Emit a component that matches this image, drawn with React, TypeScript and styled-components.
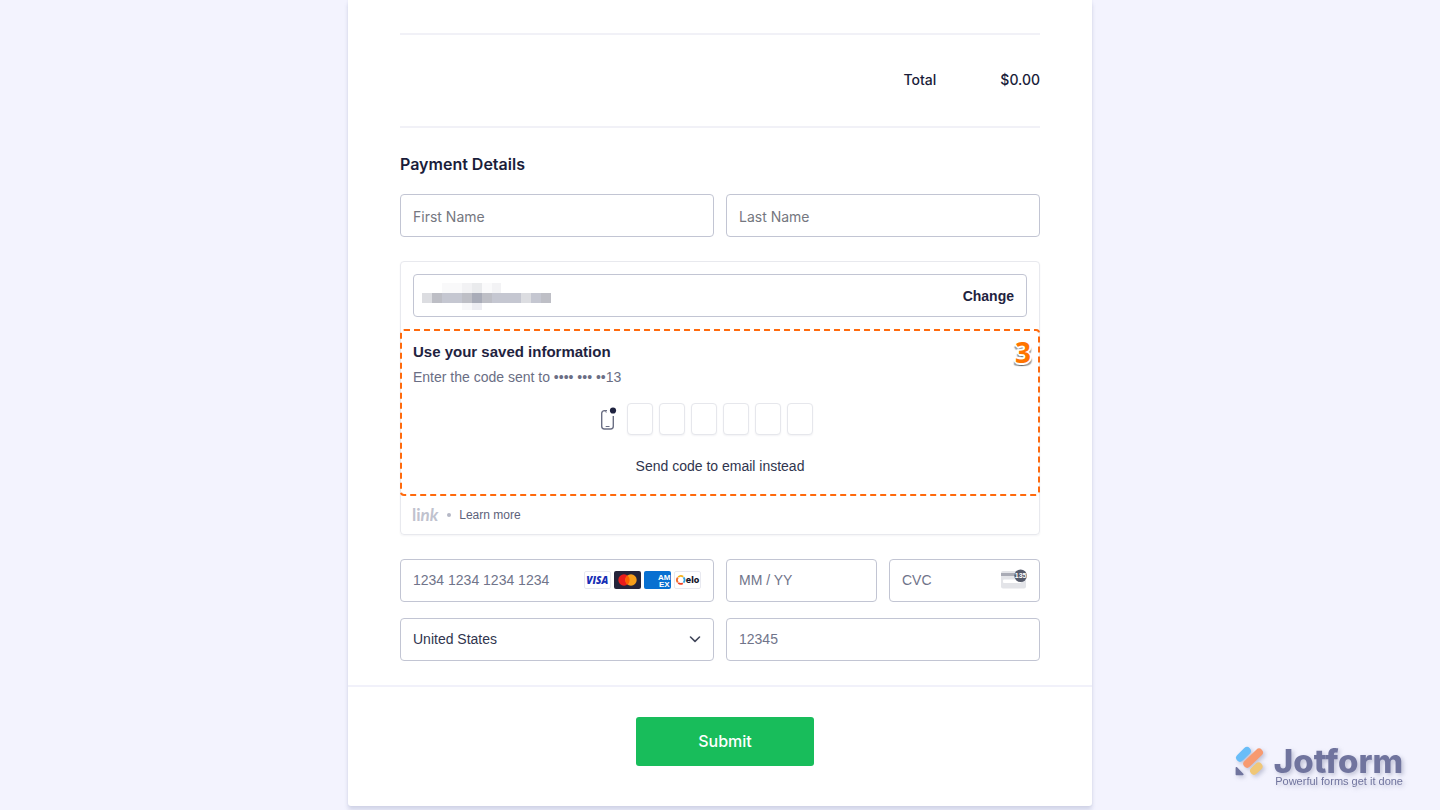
import React from "react";
import styled, { createGlobalStyle } from "styled-components";

const GlobalStyle = createGlobalStyle`
  *, *::before, *::after { box-sizing: border-box; }
  body {
    margin: 0;
    background: #f3f3fe;
    color: #1a1d3a;
    font-family: Inter, "Liberation Sans", sans-serif;
    font-size: 14px;
    line-height: 20px;
  }
`;

const Page = styled.main`
  padding-bottom: 4px;
`;

const FormCard = styled.form`
  width: 100%;
  max-width: 744px;
  margin: 0 auto;
  background: #fff;
  border-radius: 0 0 3px 3px;
  box-shadow: 0 4px 4px rgba(87, 100, 150, 0.2), 0 0 2px rgba(87, 100, 150, 0.1);
`;

const FormBody = styled.div`
  padding: 33px 52px 24px;
`;

const TotalRow = styled.div`
  display: flex;
  justify-content: flex-end;
  align-items: center;
  gap: 64px;
  height: 95px;
  padding-bottom: 2px;
  border-top: 2px solid #f1f1f7;
  border-bottom: 2px solid #f1f1f7;
  font-weight: 500;
`;

const Heading = styled.h2`
  margin: 24px 0 18px;
  font-size: 16px;
  font-weight: 600;
  line-height: 24px;
`;

const FieldGrid = styled.div`
  display: grid;
  grid-template-columns: repeat(4, 1fr);
  gap: 16px 12px;
`;

const Field = styled.div<{ $span?: number }>`
  grid-column: span ${(p) => p.$span ?? 1};
  display: flex;
  align-items: center;
  min-width: 0;
  height: 43px;
  padding: 0 12px;
  background: #fff;
  border: 1px solid #c2c5d3;
  border-radius: 4px;
`;

const PaymentField = styled(Field)`
  padding-bottom: 2px;
`;

const TextInput = styled.input<{ $sans?: boolean }>`
  flex: 1;
  min-width: 0;
  width: 0;
  height: 100%;
  padding: ${(p) => (p.$sans ? "0" : "2px 0 0")};
  border: 0;
  outline: 0;
  background: transparent;
  color: #1a1d3a;
  font-family: ${(p) => (p.$sans ? '"Liberation Sans", Arial, sans-serif' : 'Inter, sans-serif')};
  font-size: 14px;
  &::placeholder { color: ${(p) => (p.$sans ? "#70748a" : "#757780")}; opacity: 1; }
`;

const CountrySelect = styled.select`
  flex: 1;
  min-width: 0;
  height: 100%;
  padding: 0;
  border: 0;
  outline: 0;
  appearance: none;
  background: transparent;
  color: #30354e;
  font-family: "Liberation Sans", Arial, sans-serif;
  font-size: 14px;
`;

const LinkPanel = styled.section`
  margin: 24px 0;
  border: 1px solid #e8e9ee;
  border-radius: 4px;
  box-shadow: 0 1px 2px rgba(30, 40, 80, 0.05);
  font-family: "Liberation Sans", Arial, sans-serif;
`;

const EmailRow = styled.div`
  padding: 12px;
`;

const EmailField = styled(Field)`
  justify-content: space-between;
  padding-left: 8px;
`;

const TextButton = styled.button<{ $strong?: boolean }>`
  padding: 0;
  border: 0;
  background: none;
  color: ${(p) => (p.$strong ? "#1f2340" : "#30354e")};
  font-family: "Liberation Sans", Arial, sans-serif;
  font-size: 14px;
  font-weight: ${(p) => (p.$strong ? 700 : 400)};
  line-height: 20px;
  cursor: pointer;
`;

const CodeSection = styled.div`
  position: relative;
  margin: 0 -1px;
  padding: 11px 11px 18px;
  border: 2px dashed #ff6a0d;
  border-radius: 4px;
`;

const StepBadge = styled.span`
  position: absolute;
  top: 5px;
  right: 7px;
  color: #ff7400;
  font-family: "Open Sans", sans-serif;
  font-size: 28px;
  font-weight: 700;
  line-height: 32px;
  text-shadow: 2px 0 #fff, -2px 0 #fff, 0 2px #fff, 0 -2px #fff, 1px 1px #fff, -1px 1px #fff,
    2px 3px 1px rgba(0, 0, 0, 0.4), -2px 3px 1px rgba(0, 0, 0, 0.4);
`;

const CodeTitle = styled.h3`
  margin: 0 0 5px;
  color: #1f2340;
  font-size: 15px;
  font-weight: 700;
  line-height: 20px;
`;

const CodeHint = styled.p`
  margin: 0 0 16px;
  color: #6a6e84;
`;

const CodeRow = styled.div`
  display: grid;
  grid-template-columns: 1fr auto 1fr;
  align-items: center;
  column-gap: 10px;
  margin-bottom: 21px;
  & > svg { justify-self: end; }
`;

const CodeBoxes = styled.div`
  display: flex;
  gap: 6px;
`;

const CodeBox = styled.input`
  width: 26px;
  height: 32px;
  padding: 0;
  border: 1px solid #e6e7ec;
  border-radius: 4px;
  outline: 0;
  background: #fff;
  box-shadow: 0 1px 2px rgba(30, 40, 80, 0.06);
  text-align: center;
  font-size: 14px;
`;

const Centered = styled.div`
  display: flex;
  justify-content: center;
`;

const LinkFooter = styled.div`
  display: flex;
  align-items: center;
  height: 38px;
  padding: 0 11px;
  font-size: 12px;
`;

const LinkBrand = styled.span`
  color: #c0c2ce;
  font-family: Lato, sans-serif;
  font-size: 17px;
  font-weight: 700;
  & > i { font-style: italic; }
`;

const Dot = styled.span`
  width: 4px;
  height: 4px;
  margin: 0 8px 0 9px;
  border-radius: 50%;
  background: #b5b8c6;
`;

const LearnMore = styled.a`
  color: #5d627a;
  text-decoration: none;
`;

const Brands = styled.div`
  display: flex;
  gap: 3px;
`;

const FormFooter = styled.footer`
  display: flex;
  justify-content: center;
  padding: 30px 47px 40px 57px;
  border-top: 2px solid #f1f1fa;
`;

const SubmitButton = styled.button`
  width: 178px;
  height: 49px;
  padding: 0 0 2px;
  border: 0;
  border-radius: 3px;
  background: #18bd5b;
  color: #fff;
  font-family: Inter, sans-serif;
  font-size: 16px;
  font-weight: 500;
  cursor: pointer;
`;

const Watermark = styled.aside`
  position: fixed;
  right: 37px;
  bottom: 24px;
  display: flex;
  align-items: flex-start;
  gap: 9px;
  color: #70749e;
  filter: drop-shadow(2px 2px 2px rgba(70, 75, 120, 0.3));
`;

const WatermarkText = styled.div`
  display: flex;
  flex-direction: column;
  align-items: flex-end;
`;

const WatermarkName = styled.strong`
  font-size: 33px;
  font-weight: 800;
  line-height: 30px;
`;

const Tagline = styled.span`
  font-family: "Liberation Sans", Arial, sans-serif;
  font-size: 11px;
  line-height: 10px;
`;

const MASK: [number, number, number, number, string][] = [
  [0, 11, 10, 10, "#dcdde1"], [10, 11, 10, 10, "#bdbec5"], [20, 11, 20, 10, "#c5c7d1"],
  [40, 11, 10, 10, "#bebfc6"], [50, 11, 10, 10, "#a9acb8"], [60, 11, 10, 10, "#bebfc6"],
  [70, 11, 29, 10, "#c5c7d1"], [99, 11, 10, 10, "#dcdde1"], [109, 11, 10, 10, "#c5c7d1"],
  [119, 11, 10, 10, "#bebfc6"],
  [20, 1, 20, 10, "#f9f9fa"], [40, 1, 10, 10, "#f2f2f4"], [50, 1, 10, 10, "#eaebed"],
  [60, 1, 10, 10, "#fafafb"], [70, 1, 9, 10, "#f3f3f5"],
  [40, 21, 10, 7, "#f8f8fa"], [50, 21, 10, 7, "#ededf2"],
];

const MaskedEmail = () => (
  <svg width="130" height="28" role="img" aria-label="Hidden email address" shapeRendering="crispEdges">
    {MASK.map(([x, y, w, h, c]) => (
      <rect key={`${x}-${y}`} x={x} y={y} width={w} height={h} fill={c} />
    ))}
  </svg>
);

const PhoneIcon = () => (
  <svg width="17" height="24" viewBox="0 0 17 24" fill="none" aria-hidden="true">
    <path d="M7 3.6H4.4A2.7 2.7 0 0 0 1.7 6.3v13A2.7 2.7 0 0 0 4.4 22h6.2a2.7 2.7 0 0 0 2.7-2.7V9" stroke="#6b6f84" strokeWidth="1.4" />
    <path d="M5 3.8c.2 1 .6 1.4 1.6 1.4" stroke="#6b6f84" strokeWidth="1" />
    <path d="M5.7 19.5h3.8" stroke="#6b6f84" strokeWidth="1" />
    <circle cx="13" cy="3.500" r="3.100" fill="#1f2340" />
  </svg>
);

const VisaIcon = () => (
  <svg width="27" height="18" viewBox="0 0 27 18" role="img" aria-label="Visa">
    <rect x=".5" y=".5" width="26" height="17" rx="1.5" fill="#fff" stroke="#e8e9f0" />
    <text x="13.3" y="12.7" textAnchor="middle" fontFamily="Open Sans" fontWeight="800" fontStyle="italic" fontSize="10" fill="#172fb5">VISA</text>
  </svg>
);

const MastercardIcon = () => (
  <svg width="27" height="18" viewBox="0 0 27 18" role="img" aria-label="Mastercard">
    <rect width="27" height="18" rx="2" fill="#25243b" />
    <circle cx="10" cy="9" r="5.7" fill="#eb1c1c" />
    <circle cx="17" cy="9" r="5.7" fill="#f79e1b" />
    <path d="M13.5 4.5a5.7 5.7 0 0 1 0 9 5.7 5.7 0 0 1 0-9Z" fill="#ff5f00" />
  </svg>
);

const AmexIcon = () => (
  <svg width="27" height="18" viewBox="0 0 27 18" role="img" aria-label="American Express">
    <rect width="27" height="18" rx="2" fill="#0870d1" />
    <g fontFamily="Liberation Sans" fontWeight="700" fontSize="8" fill="#fff">
      <text x="14" y="8.6">AM</text>
      <text x="15" y="15.6">EX</text>
    </g>
  </svg>
);

const EloIcon = () => (
  <svg width="27" height="18" viewBox="0 0 27 18" role="img" aria-label="Elo">
    <rect x=".5" y=".5" width="26" height="17" rx="1.5" fill="#fff" stroke="#e8e9f0" />
    <g fill="none" strokeWidth="1.8">
      <path d="M4.2 6.1A3.8 3.8 0 0 1 9.2 5.8" stroke="#f5b21b" />
      <path d="M9.5 6.3A3.8 3.8 0 0 1 9.5 11.7" stroke="#2f9fe0" />
      <path d="M8.8 12.2A3.8 3.8 0 0 1 4.2 11.9" stroke="#ef4123" />
      <path d="M3.8 6.6A3.8 3.8 0 0 0 3.8 11.4" stroke="#f36b2a" />
    </g>
    <text x="11.8" y="12" fontFamily="Inter" fontWeight="800" fontSize="9" fill="#17182b">elo</text>
  </svg>
);

const CvcIcon = () => (
  <svg width="26" height="21" viewBox="0 0 26 21" role="img" aria-label="Security code on the back of the card">
    <rect y="2" width="25" height="17.5" rx="2" fill="#e3e4e8" />
    <rect y="4" width="25" height="3" fill="#a9abb5" />
    <rect x="2" y="10.5" width="18" height="3.5" rx="1" fill="#fff" />
    <circle cx="19.6" cy="6.8" r="6.3" fill="#545969" />
    <text x="19.6" y="9.4" textAnchor="middle" fontFamily="Liberation Sans" fontWeight="700" fontSize="7" fill="#fff">135</text>
  </svg>
);

const Chevron = () => (
  <svg width="12" height="8" viewBox="0 0 12 8" fill="none" aria-hidden="true">
    <path d="M1.5 2 6 6.3 10.5 2" stroke="#41465a" strokeWidth="1.6" strokeLinecap="round" strokeLinejoin="round" />
  </svg>
);

const JotformMark = () => (
  <svg width="30" height="32" viewBox="0 0 30 32" aria-hidden="true">
    <g strokeLinecap="round" strokeWidth="7.8">
      <path d="M5 11.8 12 4.9" stroke="#69bdf8" />
      <path d="M12.2 17.8 24 6.5" stroke="#f79a70" />
      <path d="M19 24.8 23.6 20.4" stroke="#f0c777" />
    </g>
    <path d="M.6 21.8v6.4c0 .6.4 1 1 1h6c1 0 1.3-.8.7-1.4l-6.2-6.5C1.5 20.7.6 21 .6 21.8Z" fill="#70749e" />
  </svg>
);

const CODE_DIGITS = [1, 2, 3, 4, 5, 6];

export default function App() {
  return (
    <Page>
      <GlobalStyle />
      <FormCard onSubmit={(e) => e.preventDefault()}>
        <FormBody>
          <TotalRow>
            <span>Total</span>
            <span>$0.00</span>
          </TotalRow>

          <Heading>Payment Details</Heading>
          <FieldGrid>
            <Field $span={2}><TextInput aria-label="First Name" placeholder="First Name" /></Field>
            <Field $span={2}><TextInput aria-label="Last Name" placeholder="Last Name" /></Field>
          </FieldGrid>

          <LinkPanel>
            <EmailRow>
              <EmailField>
                <MaskedEmail />
                <TextButton type="button" $strong>Change</TextButton>
              </EmailField>
            </EmailRow>
            <CodeSection>
              <CodeTitle>Use your saved information</CodeTitle>
              <CodeHint>Enter the code sent to •••• ••• ••13</CodeHint>
              <CodeRow>
                <PhoneIcon />
                <CodeBoxes>
                  {CODE_DIGITS.map((n) => (
                    <CodeBox key={n} aria-label={`Digit ${n}`} maxLength={1} inputMode="numeric" />
                  ))}
                </CodeBoxes>
              </CodeRow>
              <Centered>
                <TextButton type="button">Send code to email instead</TextButton>
              </Centered>
              <StepBadge>3</StepBadge>
            </CodeSection>
            <LinkFooter>
              <LinkBrand>li<i>nk</i></LinkBrand>
              <Dot />
              <LearnMore href="#learn-more">Learn more</LearnMore>
            </LinkFooter>
          </LinkPanel>

          <FieldGrid>
            <PaymentField $span={2}>
              <TextInput $sans aria-label="Card number" placeholder="1234 1234 1234 1234" />
              <Brands>
                <VisaIcon />
                <MastercardIcon />
                <AmexIcon />
                <EloIcon />
              </Brands>
            </PaymentField>
            <PaymentField><TextInput $sans aria-label="Expiration date" placeholder="MM / YY" /></PaymentField>
            <PaymentField>
              <TextInput $sans aria-label="Security code" placeholder="CVC" />
              <CvcIcon />
            </PaymentField>
            <PaymentField $span={2}>
              <CountrySelect aria-label="Country" defaultValue="US">
                <option value="US">United States</option>
              </CountrySelect>
              <Chevron />
            </PaymentField>
            <PaymentField $span={2}><TextInput $sans aria-label="ZIP code" placeholder="12345" /></PaymentField>
          </FieldGrid>
        </FormBody>
        <FormFooter>
          <SubmitButton type="submit">Submit</SubmitButton>
        </FormFooter>
      </FormCard>

      <Watermark>
        <JotformMark />
        <WatermarkText>
          <WatermarkName>Jotform</WatermarkName>
          <Tagline>Powerful forms get it done</Tagline>
        </WatermarkText>
      </Watermark>
    </Page>
  );
}
